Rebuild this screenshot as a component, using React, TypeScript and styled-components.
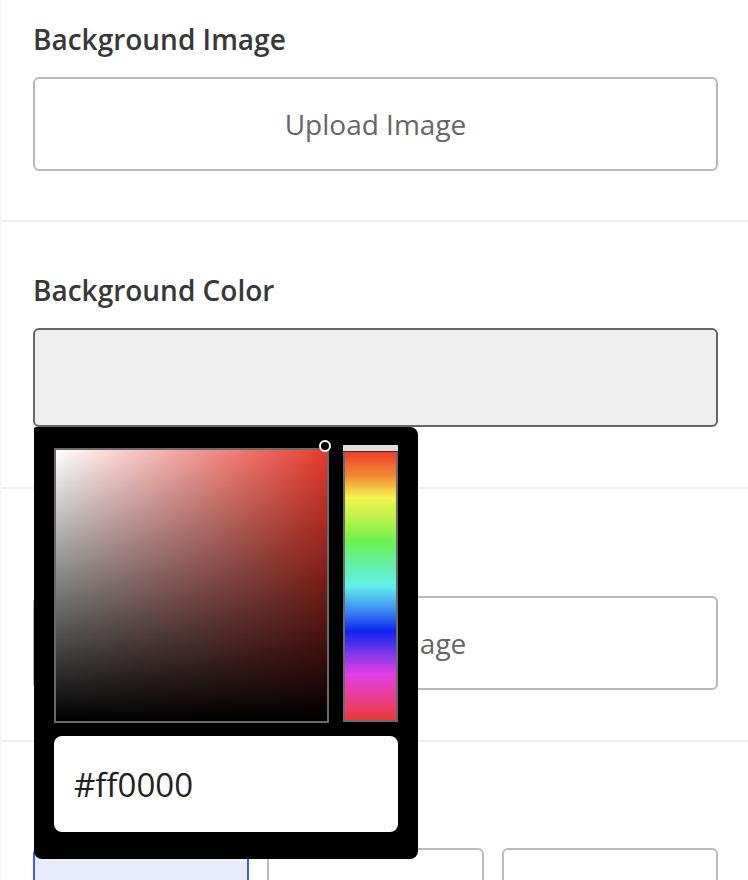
import React, { useState } from 'react';
import styled, { createGlobalStyle } from 'styled-components';

const GlobalStyle = createGlobalStyle`
    html, body {
        margin: 0;
        padding: 0;
        background: #fff;
    }
    body {
        font-family: "Open Sans", "Liberation Sans", sans-serif;
        color: #333;
    }
`;

interface SectionProps {
    top?: number;
    bottom?: number;
}

const Panel = styled.div`
    width: 748px;
    box-sizing: border-box;
    border-left: 1px solid #f3f3f3;
    overflow: hidden;
    height: 880px;
`;

const Section = styled.section<SectionProps>`
    padding: ${({ top }) => top ?? 51}px 30px ${({ bottom }) => bottom ?? 49}px 32px;
    border-bottom: 2px solid #eee;
`;

const Heading = styled.h3`
    margin: 0 0 20px 0;
    font-size: 28px;
    line-height: 36px;
    font-weight: 600;
    color: #383838;
`;

const UploadButton = styled.button`
    display: block;
    width: 100%;
    height: 94px;
    box-sizing: border-box;
    background: #fff;
    border: 2px solid #b8b8b8;
    border-radius: 6px;
    font-family: "Open Sans", "Liberation Sans", sans-serif;
    font-size: 28px;
    color: #666;
    cursor: pointer;
`;

const ColorField = styled.div`
    position: relative;
    margin-bottom: 11px;
`;

const Swatch = styled.div<{ color: string }>`
    height: 99px;
    box-sizing: border-box;
    background: ${({ color }) => color};
    border: 2px solid #666;
    border-radius: 6px;
`;

const Popover = styled.div`
    position: absolute;
    top: 99px;
    left: 1px;
    z-index: 5;
    width: 384px;
    box-sizing: border-box;
    padding: 18px 20px 27px 20px;
    background: #000;
    border-radius: 2px 8px 8px 8px;
`;

const PickerRow = styled.div`
    display: flex;
    align-items: flex-start;
    gap: 14px;
`;

const Saturation = styled.div<{ hue: string }>`
    position: relative;
    margin-top: 3px;
    width: 276px;
    height: 275px;
    box-sizing: border-box;
    border: 2px solid #6a6a6a;
    background:
        linear-gradient(to top, #000, rgba(0, 0, 0, 0)),
        linear-gradient(to right, #fff, ${({ hue }) => hue});
`;

const Pointer = styled.span`
    position: absolute;
    top: -10px;
    left: 263px;
    width: 8px;
    height: 8px;
    border: 2px solid #fff;
    border-radius: 50%;
    background: #000;
`;

const HueColumn = styled.div`
    display: flex;
    flex-direction: column;
    width: 55px;
`;

const HueCap = styled.div`
    height: 6px;
    background: #e2dcdc;
    border-bottom: 1px solid #333;
`;

const HueBar = styled.div`
    height: 270px;
    box-sizing: border-box;
    border: 2px solid #6a6a6a;
    border-top: none;
    background: linear-gradient(
        to bottom,
        #ef3e2c 0%,
        #f28a34 9%,
        #f6f24e 17%,
        #b9f24a 25%,
        #6ef24c 33%,
        #62f0a8 42%,
        #62f0ea 50%,
        #3c8cf0 59%,
        #1024f0 67%,
        #7c38e8 75%,
        #e23ee4 83%,
        #ea3c8c 92%,
        #ec3a34 100%
    );
`;

const HexInput = styled.input`
    display: block;
    margin-top: 13px;
    width: 100%;
    height: 96px;
    box-sizing: border-box;
    border: none;
    border-radius: 8px;
    padding: 0 20px;
    background: #fff;
    font-family: "Open Sans", "Liberation Sans", sans-serif;
    font-size: 33px;
    color: #222;
    outline: none;
`;

const OptionGrid = styled.div`
    display: grid;
    grid-template-columns: repeat(3, 1fr);
    gap: 18px;
`;

const Option = styled.button<{ active?: boolean }>`
    height: 90px;
    box-sizing: border-box;
    border: 2px solid ${({ active }) => (active ? '#3a5cf2' : '#bbb')};
    border-radius: 6px;
    background: ${({ active }) => (active ? '#e8ebfc' : '#fff')};
    cursor: pointer;
`;

const App: React.FC = () => {
    const [hex, setHex] = useState('#ff0000');
    const [fit, setFit] = useState('cover');

    return (
        <>
            <GlobalStyle />
            <Panel>
                <Section top={21} bottom={49}>
                    <Heading>Background Image</Heading>
                    <UploadButton>Upload Image</UploadButton>
                </Section>
                <Section top={50} bottom={49}>
                    <Heading>Background Color</Heading>
                    <ColorField>
                        <Swatch color="#eee" />
                        <Popover>
                            <PickerRow>
                                <Saturation hue="#e8392c">
                                    <Pointer />
                                </Saturation>
                                <HueColumn>
                                    <HueCap />
                                    <HueBar />
                                </HueColumn>
                            </PickerRow>
                            <HexInput value={hex} onChange={(e) => setHex(e.target.value)} />
                        </Popover>
                    </ColorField>
                </Section>
                <Section bottom={50}>
                    <Heading>Logo Image</Heading>
                    <UploadButton>Upload Image</UploadButton>
                </Section>
                <Section top={50}>
                    <Heading>Image Size</Heading>
                    <OptionGrid>
                        {['cover', 'contain', 'auto'].map((o) => (
                            <Option key={o} title={o} aria-label={o} active={fit === o} onClick={() => setFit(o)} />
                        ))}
                    </OptionGrid>
                </Section>
            </Panel>
        </>
    );
};

export default App;
